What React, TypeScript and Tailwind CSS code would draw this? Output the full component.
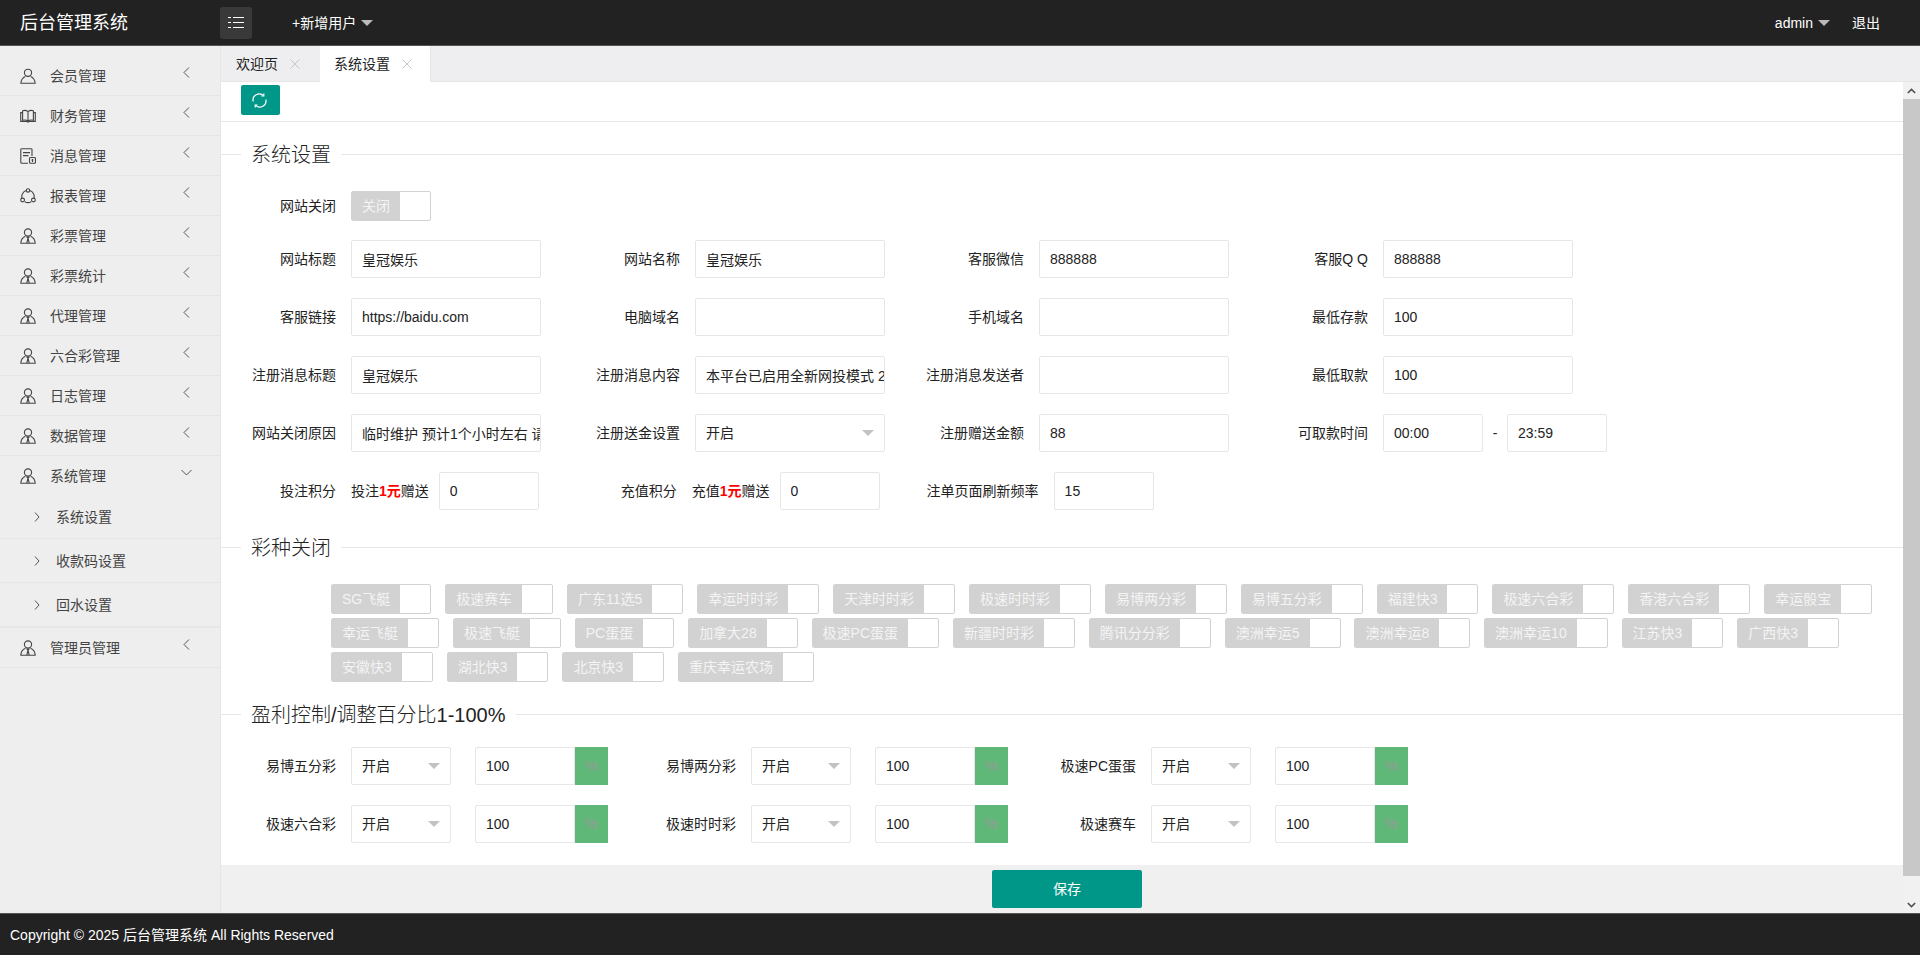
import type { ReactNode } from 'react'

const GAMES = [
  'SG飞艇', '极速赛车', '广东11选5', '幸运时时彩', '天津时时彩', '极速时时彩', '易博两分彩', '易博五分彩',
  '福建快3', '极速六合彩', '香港六合彩', '幸运骰宝', '幸运飞艇', '极速飞艇', 'PC蛋蛋', '加拿大28',
  '极速PC蛋蛋', '新疆时时彩', '腾讯分分彩', '澳洲幸运5', '澳洲幸运8', '澳洲幸运10', '江苏快3', '广西快3',
  '安徽快3', '湖北快3', '北京快3', '重庆幸运农场',
]

const inputClass =
  'h-[38px] rounded-[2px] border border-[#e6e6e6] bg-white pl-[10px] text-sm text-[#222] outline-none'

function IconBase({ children }: { children: ReactNode }) {
  return (
    <svg width="16" height="16" viewBox="0 0 16 16" fill="none" stroke="#444" strokeWidth="1.1" className="shrink-0">
      {children}
    </svg>
  )
}

const PersonIcon = () => (
  <IconBase>
    <circle cx="8" cy="4.8" r="3.6" />
    <path d="M5.4 8.6C3 9.6 1.2 11.8 .8 15.2H15.2C14.8 11.8 13 9.6 10.6 8.6" />
  </IconBase>
)

const BookIcon = () => (
  <IconBase>
    <path d="M8 3.6C6.4 2.3 4 2.3 2.6 2.8V12.2C4.4 11.8 6.6 11.9 8 13C9.4 11.9 11.6 11.8 13.4 12.2V2.8C12 2.3 9.6 2.3 8 3.6ZM8 3.6V13" />
    <path d="M2.6 4.6H.7V13.4H6.4C7 13.4 7.6 13.8 8 14.2C8.4 13.8 9 13.4 9.6 13.4H15.3V4.6H13.4" />
  </IconBase>
)

const DocIcon = () => (
  <IconBase>
    <path d="M8 15.2H1.8C1.2 15.2 .8 14.8 .8 14.2V1.6C.8 1 1.2 .7 1.8 .7H11C11.6 .7 12 1 12 1.6V8" />
    <path d="M3 4.6H10M3 7.6H8.5" />
    <rect x="9.5" y="9.5" width="6" height="5.7" rx="1" />
    <path d="M12.5 11V14M11.5 12H13.5" />
  </IconBase>
)

const ReportIcon = () => (
  <IconBase>
    <path d="M6.2 2.6A6.4 6.4 0 0 0 2 10.4M4.8 13.7A6.4 6.4 0 0 0 11.2 13.7M14 10.4A6.4 6.4 0 0 0 9.8 2.6" />
    <circle cx="8" cy="2.4" r="1.7" />
    <circle cx="2.6" cy="12" r="1.9" />
    <circle cx="13.4" cy="12" r="1.9" />
  </IconBase>
)

const StaffIcon = () => (
  <IconBase>
    <circle cx="8" cy="4.5" r="3.6" />
    <path d="M5.4 8.2C3 9.2 1 11.6 .8 15.3H15.2C15 11.6 13 9.2 10.6 8.2" />
    <path d="M6.6 8.6L8 10.2L9.4 8.6M8 10.2L6.8 15M8 10.2L9.2 15" />
  </IconBase>
)

const Caret = ({ color = 'border-t-[#c2c2c2]' }: { color?: string }) => (
  <span className={`block h-0 w-0 border-x-[6px] border-t-[6px] border-x-transparent ${color}`} />
)

const ChevronLeft = () => (
  <svg width="7" height="11" viewBox="0 0 7 11" fill="none" stroke="#555" strokeWidth="1" className="mb-[6px] ml-auto mr-[30px]">
    <path d="M6 .5L1 5.5L6 10.5" />
  </svg>
)

const ChevronDown = () => (
  <svg width="11" height="7" viewBox="0 0 11 7" fill="none" stroke="#555" strokeWidth="1" className="mb-[6px] ml-auto mr-[28px]">
    <path d="M.5 1L5.5 6L10.5 1" />
  </svg>
)

const Close = () => (
  <svg width="10" height="10" viewBox="0 0 10 10" stroke="#c6c6c6" strokeWidth="1">
    <path d="M.5 .5L9.5 9.5M9.5 .5L.5 9.5" />
  </svg>
)

function MenuRow({ icon, label, open }: { icon: ReactNode; label: string; open?: boolean }) {
  return (
    <div className={`flex items-center pl-[20px] text-sm text-[#444] ${open ? 'h-[39px]' : 'h-10 border-b border-[#e6e6e6]'}`}>
      {icon}
      <span className="ml-[14px]">{label}</span>
      {open ? <ChevronDown /> : <ChevronLeft />}
    </div>
  )
}

function SubRow({ label, last }: { label: string; last?: boolean }) {
  return (
    <div className={`flex items-center border-[#e6e6e6] pl-[34px] text-sm text-[#444] ${last ? 'h-[45px] border-b-2' : 'h-[44px] border-b'}`}>
      <svg width="6" height="10" viewBox="0 0 6 10" fill="none" stroke="#555" strokeWidth="1">
        <path d="M1 .5L5 5L1 9.5" />
      </svg>
      <span className="ml-[16px]">{label}</span>
    </div>
  )
}

function Legend({ title, className }: { title: string; className: string }) {
  return (
    <div className={`flex h-[28px] items-center ${className}`}>
      <div className="-mt-px h-px w-[20px] bg-[#e6e6e6]" />
      <span className="px-[10px] text-xl font-light text-[#222]">{title}</span>
      <div className="-mt-px h-px flex-1 bg-[#e6e6e6]" />
    </div>
  )
}

function Label({ children }: { children: ReactNode }) {
  return <label className="block w-[110px] shrink-0 text-right text-sm whitespace-nowrap text-[#222]">{children}</label>
}

function Switch({ label }: { label: string }) {
  return (
    <div className="flex h-[30px] overflow-hidden rounded-[2px] border border-[#d2d2d2] bg-white">
      <span className="flex items-center bg-[#d2d2d2] px-[10px] text-sm whitespace-nowrap text-[#f4f4f4]">{label}</span>
      <span className="w-[30px]" />
    </div>
  )
}

function TextField({ label, value = '' }: { label: string; value?: string }) {
  return (
    <div className="flex w-[344px] items-center">
      <Label>{label}</Label>
      <input readOnly value={value} className={`ml-[15px] w-[190px] ${inputClass}`} />
    </div>
  )
}

function SelectBox({ width }: { width: string }) {
  return (
    <div className={`flex h-[38px] items-center justify-between rounded-[2px] border border-[#e6e6e6] bg-white pl-[10px] pr-[10px] text-sm text-[#222] ${width}`}>
      开启
      <Caret />
    </div>
  )
}

function RateField({ label }: { label: string }) {
  return (
    <div className="flex w-[400px] items-center">
      <Label>{label}</Label>
      <div className="ml-[15px]">
        <SelectBox width="w-[100px]" />
      </div>
      <input readOnly value="100" className={`ml-[24px] w-[100px] rounded-r-none ${inputClass}`} />
      <span className="flex h-[38px] w-[33px] items-center justify-center bg-[#5fb878] text-sm text-[#999]">%</span>
    </div>
  )
}

const Bonus = ({ name }: { name: string }) => (
  <span className="ml-[15px] text-sm whitespace-nowrap text-[#222]">
    {name}
    <b className="text-[#ff0000]">1元</b>
    赠送
  </span>
)

export default function App() {
  return (
    <div className="flex h-screen w-full flex-col overflow-hidden bg-white [font-family:'Liberation_Sans','Noto_Sans_CJK_SC',sans-serif]">
      <header className="flex h-[46px] shrink-0 items-center border-b border-[#555] bg-[#222] text-sm text-white">
        <div className="w-[220px] pl-[20px] text-lg">后台管理系统</div>
        <button type="button" className="flex h-8 w-8 items-center justify-center rounded-[3px] bg-[#393939]">
          <svg width="16" height="11" viewBox="0 0 16 11" stroke="#fff" strokeWidth="1">
            <path d="M0 .5H3M5 .5H16M0 5.5H3M5 5.5H16M0 10.5H3M5 10.5H16" />
          </svg>
        </button>
        <span className="ml-[40px]">+新增用户</span>
        <span className="ml-[5px]">
          <Caret color="border-t-[#bbb]" />
        </span>
        <span className="ml-auto">admin</span>
        <span className="ml-[5px]">
          <Caret color="border-t-[#bbb]" />
        </span>
        <span className="ml-[22px] mr-[40px]">退出</span>
      </header>

      <div className="flex min-h-0 flex-1">
        <aside className="w-[221px] shrink-0 border-r border-[#e6e6e6] bg-[#eee] pt-[10px]">
          <MenuRow icon={<PersonIcon />} label="会员管理" />
          <MenuRow icon={<BookIcon />} label="财务管理" />
          <MenuRow icon={<DocIcon />} label="消息管理" />
          <MenuRow icon={<ReportIcon />} label="报表管理" />
          <MenuRow icon={<StaffIcon />} label="彩票管理" />
          <MenuRow icon={<StaffIcon />} label="彩票统计" />
          <MenuRow icon={<StaffIcon />} label="代理管理" />
          <MenuRow icon={<StaffIcon />} label="六合彩管理" />
          <MenuRow icon={<StaffIcon />} label="日志管理" />
          <MenuRow icon={<StaffIcon />} label="数据管理" />
          <MenuRow icon={<StaffIcon />} label="系统管理" open />
          <SubRow label="系统设置" />
          <SubRow label="收款码设置" />
          <SubRow label="回水设置" last />
          <MenuRow icon={<StaffIcon />} label="管理员管理" />
        </aside>

        <main className="flex min-w-0 flex-1 flex-col">
          <div className="flex h-[36px] shrink-0 border-b border-[#e6e6e6] bg-[#eeeef0] text-sm text-[#222]">
            <div className="flex items-center gap-[12px] pl-[15px] pr-[20px]">
              欢迎页
              <Close />
            </div>
            <div className="flex h-[36px] items-center gap-[12px] border-r border-[#e6e6e6] bg-white pl-[14px] pr-[18px]">
              系统设置
              <Close />
            </div>
          </div>

          <div className="flex min-h-0 flex-1">
            <div className="flex min-w-0 flex-1 flex-col bg-[#f0f0f0]">
              <div className="h-[783px] shrink-0 bg-white">
                <div className="h-[40px] border-b border-[#e6e6e6] pl-[20px] pt-[3px]">
                  <button type="button" className="flex h-[30px] w-[39px] items-center justify-center rounded-[2px] bg-[#009688] pr-[2px]">
                    <svg width="15" height="15" viewBox="0 0 15 15" fill="none" stroke="#fff" strokeWidth="1.2">
                      <path d="M1.2 8.5A6.2 6.2 0 0 1 11.5 2.6M13.8 6.5A6.2 6.2 0 0 1 3.5 12.4" />
                      <path d="M11.8 .6V3H9.4M3.2 14.4V12H5.6" />
                    </svg>
                  </button>
                </div>

                <Legend title="系统设置" className="mt-[19px]" />

                <div className="mt-[18px] flex flex-col gap-[20px] pl-[5px]">
                  <div className="mb-[-5px] flex h-[38px] items-center">
                    <Label>网站关闭</Label>
                    <div className="ml-[15px]">
                      <Switch label="关闭" />
                    </div>
                  </div>
                  <div className="flex h-[38px]">
                    <TextField label="网站标题" value="皇冠娱乐" />
                    <TextField label="网站名称" value="皇冠娱乐" />
                    <TextField label="客服微信" value="888888" />
                    <TextField label="客服Q Q" value="888888" />
                  </div>
                  <div className="flex h-[38px]">
                    <TextField label="客服链接" value="https://baidu.com" />
                    <TextField label="电脑域名" />
                    <TextField label="手机域名" />
                    <TextField label="最低存款" value="100" />
                  </div>
                  <div className="flex h-[38px]">
                    <TextField label="注册消息标题" value="皇冠娱乐" />
                    <TextField label="注册消息内容" value="本平台已启用全新网投模式 2025" />
                    <TextField label="注册消息发送者" />
                    <TextField label="最低取款" value="100" />
                  </div>
                  <div className="flex h-[38px]">
                    <TextField label="网站关闭原因" value="临时维护 预计1个小时左右 请耐心等待" />
                    <div className="flex w-[344px] items-center">
                      <Label>注册送金设置</Label>
                      <div className="ml-[15px]">
                        <SelectBox width="w-[190px]" />
                      </div>
                    </div>
                    <TextField label="注册赠送金额" value="88" />
                    <div className="flex items-center">
                      <Label>可取款时间</Label>
                      <input readOnly value="00:00" className={`ml-[15px] w-[100px] ${inputClass}`} />
                      <span className="w-[24px] text-center text-sm text-[#222]">-</span>
                      <input readOnly value="23:59" className={`w-[100px] ${inputClass}`} />
                    </div>
                  </div>
                  <div className="flex h-[38px] items-center">
                    <Label>投注积分</Label>
                    <Bonus name="投注" />
                    <input readOnly value="0" className={`ml-[10px] w-[100px] ${inputClass}`} />
                    <div className="ml-[28px]">
                      <Label>充值积分</Label>
                    </div>
                    <Bonus name="充值" />
                    <input readOnly value="0" className={`ml-[10px] w-[100px] ${inputClass}`} />
                    <span className="ml-[47px] text-sm whitespace-nowrap text-[#222]">注单页面刷新频率</span>
                    <input readOnly value="15" className={`ml-[15px] w-[100px] ${inputClass}`} />
                  </div>
                </div>

                <Legend title="彩种关闭" className="mt-[24px]" />

                <div className="ml-[110px] mt-[22px] flex w-[1560px] flex-wrap gap-x-[13.9px] gap-y-[4px]">
                  {GAMES.map((game) => (
                    <Switch key={game} label={game} />
                  ))}
                </div>

                <Legend title="盈利控制/调整百分比1-100%" className="mt-[19px]" />

                <div className="mt-[18px] flex flex-col gap-[20px] pl-[5px]">
                  <div className="flex">
                    <RateField label="易博五分彩" />
                    <RateField label="易博两分彩" />
                    <RateField label="极速PC蛋蛋" />
                  </div>
                  <div className="flex">
                    <RateField label="极速六合彩" />
                    <RateField label="极速时时彩" />
                    <RateField label="极速赛车" />
                  </div>
                </div>
              </div>

              <div className="flex justify-center pl-[10px] pt-[5px]">
                <button type="button" className="h-[38px] w-[150px] rounded-[2px] bg-[#009688] text-sm text-white">
                  保存
                </button>
              </div>
            </div>

            <div className="flex w-[17px] shrink-0 flex-col bg-[#f1f1f1]">
              <div className="flex h-[17px] items-center justify-center">
                <svg width="9" height="6" viewBox="0 0 9 6" fill="none" stroke="#505050" strokeWidth="1.6">
                  <path d="M.8 5L4.5 1.4L8.2 5" />
                </svg>
              </div>
              <div className="h-[777px] bg-[#c8c8c8]" />
              <div className="mt-auto flex h-[17px] items-center justify-center">
                <svg width="9" height="6" viewBox="0 0 9 6" fill="none" stroke="#505050" strokeWidth="1.6">
                  <path d="M.8 1L4.5 4.6L8.2 1" />
                </svg>
              </div>
            </div>
          </div>
        </main>
      </div>

      <footer className="flex h-[42px] shrink-0 items-center border-t border-[#555] bg-[#222] pl-[10px] text-sm text-white">
        Copyright © 2025 后台管理系统 All Rights Reserved
      </footer>
    </div>
  )
}
